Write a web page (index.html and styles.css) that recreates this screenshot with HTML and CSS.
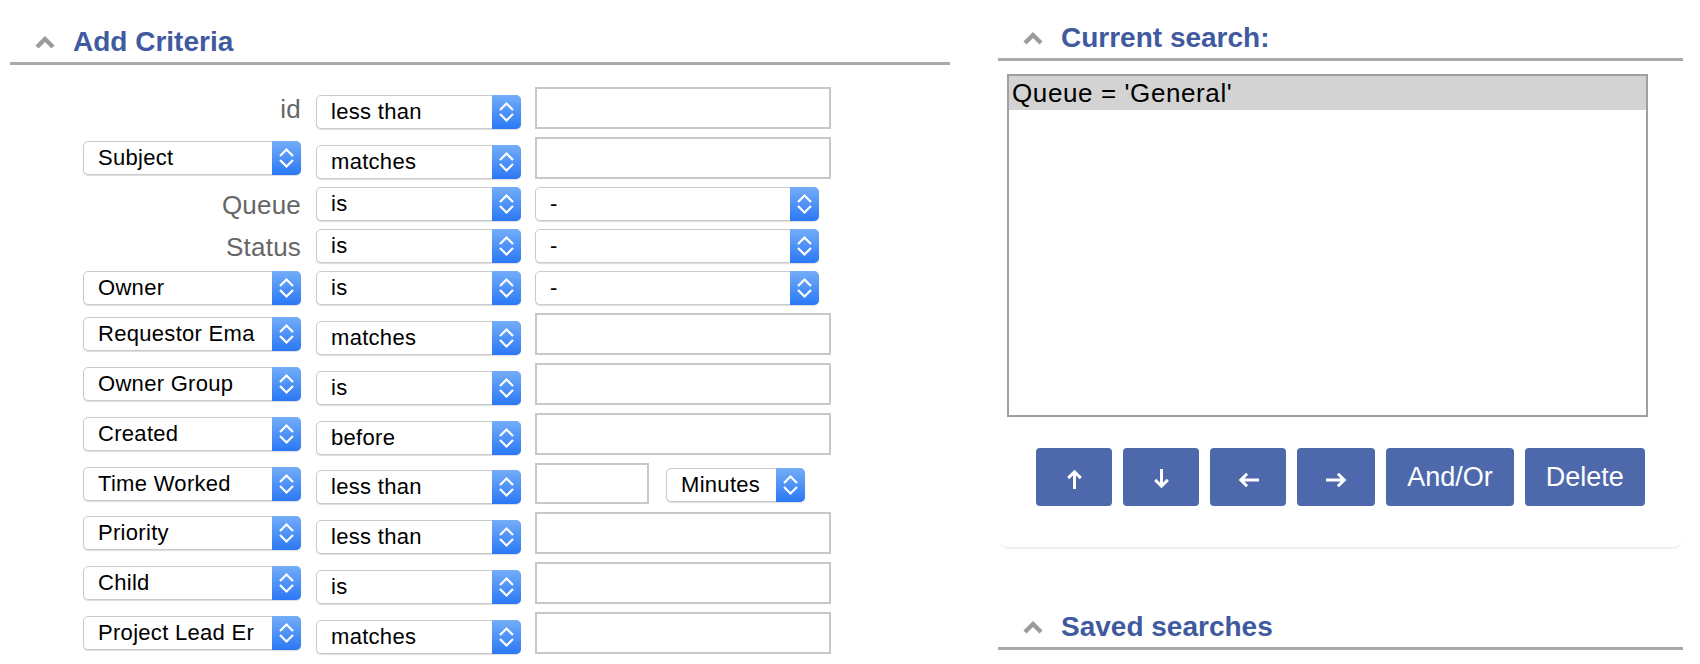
FILE: index.html
```html
<!DOCTYPE html>
<html lang="en">
<head>
<meta charset="utf-8">
<title>Query Builder</title>
<link rel="stylesheet" href="styles.css">
</head>
<body>
<div class="page">
  <section class="col-left">
    <h2 class="sect-head"><svg class="caret" viewBox="0 0 22 14"><polyline points="3,12 11,4 19,12"/></svg><span>Add Criteria</span></h2>
    <div class="criteria">
      <div class="row">
        <div class="field"><span class="label">id</span></div>
        <div class="select op"><span class="sel-text">less than</span><span class="sel-arrow"><svg width="29" height="34" viewBox="0 0 29 34"><path d="M8 15L14.5 8.5L21 15M8 19L14.5 25.5L21 19"/></svg></span></div>
        <input class="text-input" type="text">
      </div>
      <div class="row">
        <div class="field"><div class="select"><span class="sel-text">Subject</span><span class="sel-arrow"><svg width="29" height="34" viewBox="0 0 29 34"><path d="M8 15L14.5 8.5L21 15M8 19L14.5 25.5L21 19"/></svg></span></div></div>
        <div class="select op"><span class="sel-text">matches</span><span class="sel-arrow"><svg width="29" height="34" viewBox="0 0 29 34"><path d="M8 15L14.5 8.5L21 15M8 19L14.5 25.5L21 19"/></svg></span></div>
        <input class="text-input" type="text">
      </div>
      <div class="row">
        <div class="field"><span class="label">Queue</span></div>
        <div class="select op"><span class="sel-text">is</span><span class="sel-arrow"><svg width="29" height="34" viewBox="0 0 29 34"><path d="M8 15L14.5 8.5L21 15M8 19L14.5 25.5L21 19"/></svg></span></div>
        <div class="select val-select"><span class="sel-text">-</span><span class="sel-arrow"><svg width="29" height="34" viewBox="0 0 29 34"><path d="M8 15L14.5 8.5L21 15M8 19L14.5 25.5L21 19"/></svg></span></div>
      </div>
      <div class="row">
        <div class="field"><span class="label">Status</span></div>
        <div class="select op"><span class="sel-text">is</span><span class="sel-arrow"><svg width="29" height="34" viewBox="0 0 29 34"><path d="M8 15L14.5 8.5L21 15M8 19L14.5 25.5L21 19"/></svg></span></div>
        <div class="select val-select"><span class="sel-text">-</span><span class="sel-arrow"><svg width="29" height="34" viewBox="0 0 29 34"><path d="M8 15L14.5 8.5L21 15M8 19L14.5 25.5L21 19"/></svg></span></div>
      </div>
      <div class="row">
        <div class="field"><div class="select"><span class="sel-text">Owner</span><span class="sel-arrow"><svg width="29" height="34" viewBox="0 0 29 34"><path d="M8 15L14.5 8.5L21 15M8 19L14.5 25.5L21 19"/></svg></span></div></div>
        <div class="select op"><span class="sel-text">is</span><span class="sel-arrow"><svg width="29" height="34" viewBox="0 0 29 34"><path d="M8 15L14.5 8.5L21 15M8 19L14.5 25.5L21 19"/></svg></span></div>
        <div class="select val-select"><span class="sel-text">-</span><span class="sel-arrow"><svg width="29" height="34" viewBox="0 0 29 34"><path d="M8 15L14.5 8.5L21 15M8 19L14.5 25.5L21 19"/></svg></span></div>
      </div>
      <div class="row">
        <div class="field"><div class="select"><span class="sel-text">Requestor Ema</span><span class="sel-arrow"><svg width="29" height="34" viewBox="0 0 29 34"><path d="M8 15L14.5 8.5L21 15M8 19L14.5 25.5L21 19"/></svg></span></div></div>
        <div class="select op"><span class="sel-text">matches</span><span class="sel-arrow"><svg width="29" height="34" viewBox="0 0 29 34"><path d="M8 15L14.5 8.5L21 15M8 19L14.5 25.5L21 19"/></svg></span></div>
        <input class="text-input" type="text">
      </div>
      <div class="row">
        <div class="field"><div class="select"><span class="sel-text">Owner Group</span><span class="sel-arrow"><svg width="29" height="34" viewBox="0 0 29 34"><path d="M8 15L14.5 8.5L21 15M8 19L14.5 25.5L21 19"/></svg></span></div></div>
        <div class="select op"><span class="sel-text">is</span><span class="sel-arrow"><svg width="29" height="34" viewBox="0 0 29 34"><path d="M8 15L14.5 8.5L21 15M8 19L14.5 25.5L21 19"/></svg></span></div>
        <input class="text-input" type="text">
      </div>
      <div class="row">
        <div class="field"><div class="select"><span class="sel-text">Created</span><span class="sel-arrow"><svg width="29" height="34" viewBox="0 0 29 34"><path d="M8 15L14.5 8.5L21 15M8 19L14.5 25.5L21 19"/></svg></span></div></div>
        <div class="select op"><span class="sel-text">before</span><span class="sel-arrow"><svg width="29" height="34" viewBox="0 0 29 34"><path d="M8 15L14.5 8.5L21 15M8 19L14.5 25.5L21 19"/></svg></span></div>
        <input class="text-input" type="text">
      </div>
      <div class="row">
        <div class="field"><div class="select"><span class="sel-text">Time Worked</span><span class="sel-arrow"><svg width="29" height="34" viewBox="0 0 29 34"><path d="M8 15L14.5 8.5L21 15M8 19L14.5 25.5L21 19"/></svg></span></div></div>
        <div class="select op"><span class="sel-text">less than</span><span class="sel-arrow"><svg width="29" height="34" viewBox="0 0 29 34"><path d="M8 15L14.5 8.5L21 15M8 19L14.5 25.5L21 19"/></svg></span></div>
        <input class="text-input short" type="text">
        <div class="select minutes"><span class="sel-text">Minutes</span><span class="sel-arrow"><svg width="29" height="34" viewBox="0 0 29 34"><path d="M8 15L14.5 8.5L21 15M8 19L14.5 25.5L21 19"/></svg></span></div>
      </div>
      <div class="row">
        <div class="field"><div class="select"><span class="sel-text">Priority</span><span class="sel-arrow"><svg width="29" height="34" viewBox="0 0 29 34"><path d="M8 15L14.5 8.5L21 15M8 19L14.5 25.5L21 19"/></svg></span></div></div>
        <div class="select op"><span class="sel-text">less than</span><span class="sel-arrow"><svg width="29" height="34" viewBox="0 0 29 34"><path d="M8 15L14.5 8.5L21 15M8 19L14.5 25.5L21 19"/></svg></span></div>
        <input class="text-input" type="text">
      </div>
      <div class="row">
        <div class="field"><div class="select"><span class="sel-text">Child</span><span class="sel-arrow"><svg width="29" height="34" viewBox="0 0 29 34"><path d="M8 15L14.5 8.5L21 15M8 19L14.5 25.5L21 19"/></svg></span></div></div>
        <div class="select op"><span class="sel-text">is</span><span class="sel-arrow"><svg width="29" height="34" viewBox="0 0 29 34"><path d="M8 15L14.5 8.5L21 15M8 19L14.5 25.5L21 19"/></svg></span></div>
        <input class="text-input" type="text">
      </div>
      <div class="row">
        <div class="field"><div class="select"><span class="sel-text">Project Lead Er</span><span class="sel-arrow"><svg width="29" height="34" viewBox="0 0 29 34"><path d="M8 15L14.5 8.5L21 15M8 19L14.5 25.5L21 19"/></svg></span></div></div>
        <div class="select op"><span class="sel-text">matches</span><span class="sel-arrow"><svg width="29" height="34" viewBox="0 0 29 34"><path d="M8 15L14.5 8.5L21 15M8 19L14.5 25.5L21 19"/></svg></span></div>
        <input class="text-input" type="text">
      </div>
    </div>
  </section>

  <section class="col-right">
    <div class="card">
      <h2 class="sect-head"><svg class="caret" viewBox="0 0 22 14"><polyline points="3,12 11,4 19,12"/></svg><span>Current search:</span></h2>
      <div class="query-box">
        <div class="query-item selected">Queue = 'General'</div>
      </div>
      <div class="buttons">
        <button class="btn arrow" type="button"><svg class="arr-v" viewBox="0 0 17 20"><path d="M8.5 20V2.8M2.2 9.1L8.5 2.8L14.8 9.1"/></svg></button>
        <button class="btn arrow" type="button"><svg class="arr-v" viewBox="0 0 17 20"><path d="M8.5 0V17.2M2.2 10.9L8.5 17.2L14.8 10.9"/></svg></button>
        <button class="btn arrow" type="button"><svg class="arr-h" viewBox="0 0 21 16"><path d="M21 8H2.8M9.1 1.7L2.8 8L9.1 14.3"/></svg></button>
        <button class="btn arrow wide" type="button"><svg class="arr-h" viewBox="0 0 21 16"><path d="M0 8H18.2M11.9 1.7L18.2 8L11.9 14.3"/></svg></button>
        <button class="btn" type="button">And/Or</button>
        <button class="btn" type="button">Delete</button>
      </div>
    </div>
    <h2 class="sect-head saved"><svg class="caret" viewBox="0 0 22 14"><polyline points="3,12 11,4 19,12"/></svg><span>Saved searches</span></h2>
  </section>
</div>
</body>
</html>
```

FILE: styles.css
```css
* {
  box-sizing: border-box;
}

html,
body {
  margin: 0;
  padding: 0;
  background: #fff;
}

body {
  width: 1700px;
  height: 664px;
  overflow: hidden;
  font-family: "Liberation Sans", Arial, sans-serif;
  color: #000;
}

.page {
  display: flex;
  align-items: flex-start;
  padding-left: 10px;
}

.col-left {
  width: 940px;
  padding-top: 26px;
}

.col-right {
  width: 685px;
  margin-left: 48px;
  padding-top: 22px;
}

/* Section headers */
.sect-head {
  margin: 0;
  display: flex;
  align-items: center;
  padding: 0 0 4px 24px;
  border-bottom: 3px solid #a9a9a9;
  font-size: 28px;
  line-height: 32px;
  font-weight: bold;
  color: #3f5a9e;
}

.caret {
  flex: none;
  width: 22px;
  height: 14px;
  margin-right: 17px;
}

.caret polyline {
  fill: none;
  stroke: #9b9b9b;
  stroke-width: 4.4;
}

/* Criteria form */
.criteria {
  display: flex;
  flex-direction: column;
  gap: 8px;
  margin-top: 22px;
  padding-left: 73px;
}

.row {
  display: flex;
  align-items: flex-end;
}

.field {
  width: 218px;
  margin-right: 15px;
  align-self: center;
  display: flex;
  justify-content: flex-end;
}

.label {
  font-size: 26px;
  line-height: 30px;
  padding-top: 2px;
  letter-spacing: 0.2px;
  color: #666;
}

.select {
  display: flex;
  height: 34px;
  border: 1px solid #cbcbcb;
  border-radius: 5px;
  background: #fff;
  box-shadow: 0 1px 1px rgba(0, 0, 0, 0.14);
}

.field .select {
  width: 218px;
}

.op {
  width: 205px;
  margin-right: 14px;
}

.val-select {
  width: 284px;
}

.minutes {
  width: 139px;
  margin-left: 17px;
  margin-top: 3px;
  align-self: center;
}

.sel-text {
  flex: 1;
  min-width: 0;
  overflow: hidden;
  white-space: nowrap;
  padding-left: 14px;
  font-size: 22px;
  line-height: 32px;
  letter-spacing: 0.3px;
}

.sel-arrow {
  flex: none;
  width: 29px;
  margin: -1px -1px -1px 0;
  border-radius: 0 5px 5px 0;
  background: linear-gradient(#74adf8, #2b78f5);
  display: flex;
}

.sel-arrow svg {
  display: block;
}

.sel-arrow path {
  fill: none;
  stroke: #fff;
  stroke-width: 2.2;
}

.text-input {
  width: 296px;
  height: 42px;
  margin: 0;
  padding: 0 6px;
  border: 2px solid #c8c8c8;
  border-radius: 0;
  background: #fff;
  font: 22px "Liberation Sans", Arial, sans-serif;
}

.text-input.short {
  width: 114px;
  height: 41px;
}

/* Current search card */
.card {
  border-radius: 10px;
  box-shadow: 0 3px 3px -2px rgba(0, 0, 0, 0.12);
  padding-bottom: 41px;
}

.query-box {
  margin: 13px 0 0 9px;
  width: 641px;
  height: 343px;
  border: 2px solid #a0a0a0;
  background: #fff;
}

.query-item {
  font-size: 26px;
  line-height: 34px;
  padding-left: 3px;
  letter-spacing: 0.6px;
  color: #000;
}

.query-item.selected {
  background: #d3d3d3;
}

.buttons {
  display: flex;
  justify-content: center;
  gap: 11px;
  margin-top: 31px;
}

.btn {
  height: 58px;
  padding: 0 21px;
  border: none;
  border-radius: 4px;
  background: #4d69ac;
  color: #fff;
  font: 27px "Liberation Sans", Arial, sans-serif;
  display: flex;
  align-items: center;
  justify-content: center;
}

.btn.arrow {
  width: 76px;
  padding: 0;
}

.btn.arrow.wide {
  width: 78px;
}

.btn svg {
  flex: none;
  display: block;
}

.btn svg path {
  fill: none;
  stroke: #fff;
  stroke-width: 3;
}

.arr-v {
  width: 17px;
  height: 20px;
  margin-top: 4px;
}

.arr-h {
  width: 21px;
  height: 16px;
  margin-top: 5px;
}

.saved {
  margin-top: 64px;
}
```
